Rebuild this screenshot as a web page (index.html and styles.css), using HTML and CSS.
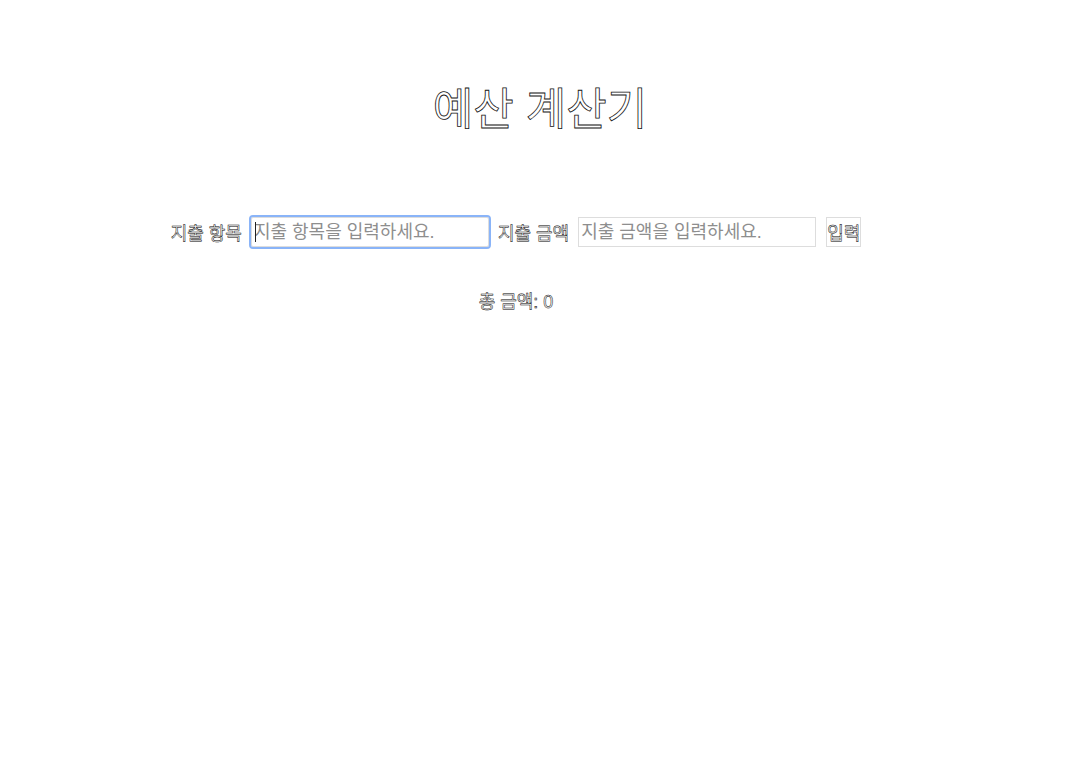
FILE: index.html
```html
<!DOCTYPE html>
<html lang="ko">
<head>
<meta charset="utf-8">
<title>예산 계산기</title>
<link rel="stylesheet" href="styles.css">
</head>
<body>
<div class="app">
  <h1 class="title">예산 계산기</h1>
  <div class="wrap">
    <form class="form">
      <label class="label" for="item">지출 항목</label>
      <span class="field-box">
        <input id="item" class="field field-focus" type="text" placeholder="지출 항목을 입력하세요.">
        <span class="caret"></span>
      </span>
      <label class="label" for="amount">지출 금액</label>
      <input id="amount" class="field" type="text" placeholder="지출 금액을 입력하세요.">
      <button class="btn" type="button">입력</button>
    </form>
    <div class="total">총 금액: 0</div>
  </div>
</div>
</body>
</html>
```
FILE: styles.css
```css
html, body {
  margin: 0;
  padding: 0;
  background: #fff;
}
body {
  font-family: "Liberation Sans", "Noto Sans CJK KR", sans-serif;
  color: #fff;
}
.app {
  display: flex;
  flex-direction: column;
  align-items: center;
  padding-top: 80px;
}
.title {
  margin: 0;
  font-size: 44px;
  font-weight: 400;
  color: #fff;
  -webkit-text-stroke: 0.8px #111;
  line-height: 60px;
}
.wrap {
  display: flex;
  flex-direction: column;
  align-items: center;
  margin-top: 77px;
  margin-right: 48px;
}
.form {
  display: flex;
  align-items: center;
  gap: 9px;
}
.label {
  font-size: 18px;
  color: #fff;
  -webkit-text-stroke: 0.5px #000;
}
.field-box {
  position: relative;
  display: flex;
}
.caret {
  position: absolute;
  left: 4px;
  top: 5px;
  width: 1px;
  height: 20px;
  background: #222;
}
.field {
  box-sizing: border-box;
  width: 238px;
  height: 30px;
  border: 1px solid #ddd;
  padding: 0 2px;
  font-family: "Liberation Sans", "Noto Sans CJK KR", sans-serif;
  font-size: 18px;
  background: #fff;
}
.field::placeholder {
  color: #8e8e8e;
}
.field-focus {
  outline: 2px solid #8ab4f8;
  outline-offset: 0;
  border-radius: 2px;
}
.btn {
  box-sizing: border-box;
  height: 30px;
  padding: 0;
  border: 1px solid #ddd;
  background: #fff;
  font-family: "Liberation Sans", "Noto Sans CJK KR", sans-serif;
  font-size: 18px;
  color: #fff;
  -webkit-text-stroke: 0.5px #000;
  margin-left: 1px;
}
.total {
  margin-top: 40px;
  font-size: 18px;
  color: #fff;
  -webkit-text-stroke: 0.5px #000;
}
```
